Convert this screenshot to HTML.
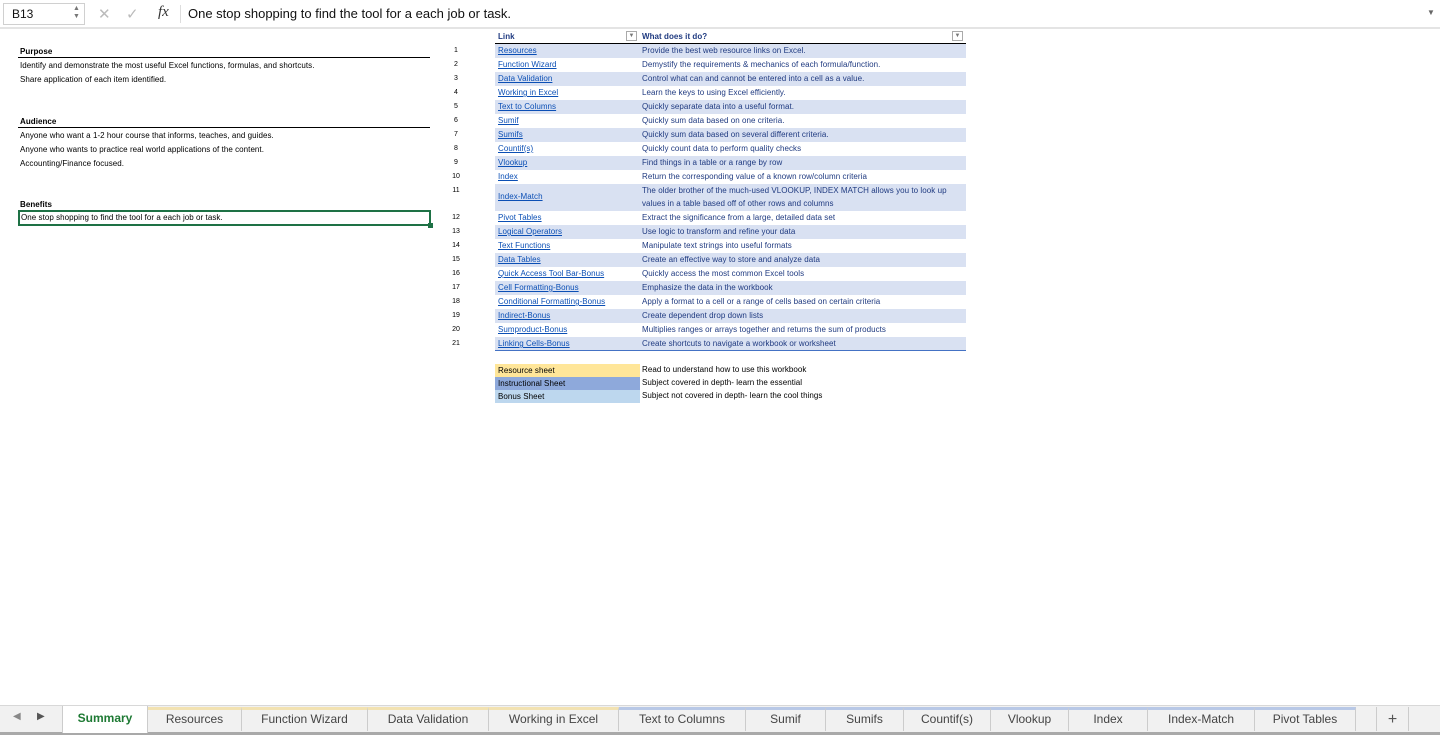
<!DOCTYPE html>
<html><head><meta charset="utf-8"><style>
*{margin:0;padding:0;box-sizing:border-box}
body{width:1440px;height:735px;overflow:hidden;background:#fff;font-family:"Liberation Sans",sans-serif;position:relative}
.a{position:absolute;white-space:nowrap}
.c{font-size:8px;line-height:14px;color:#000;letter-spacing:0.05px}
.b{font-weight:bold}
.lk{color:#0b4fb5;text-decoration:underline}
.ds{color:#1f3a80}
.n{font-size:7px;color:#000;width:20px;text-align:center}
.row{position:absolute;left:495px;width:471px;height:14px}
.sh{background:#d9e1f2}
.tab{position:absolute;top:707px;height:24px;font-size:12px;color:#444;text-align:center;line-height:19px;border-right:1px solid #ccc;border-top:3px solid #f2e2b2}
.tb{border-top-color:#b8c8e6}
</style></head><body>
<div class="a" style="left:0;top:0;width:1440px;height:28px;background:#fff;border-bottom:1px solid #c8c8c8"></div>
<div class="a" style="left:0;top:27px;width:1440px;height:2px;background:#e4e4e4"></div>
<div class="a" style="left:3px;top:3px;width:82px;height:22px;border:1px solid #d0d0d0;font-size:12px;line-height:20px;padding-left:8px;color:#111">B13</div>
<div class="a" style="left:73px;top:5px;font-size:7px;color:#777;line-height:8px">▲<br>▼</div>
<div class="a" style="left:98px;top:5px;font-size:15px;color:#bbb">✕</div>
<div class="a" style="left:126px;top:5px;font-size:15px;color:#bbb">✓</div>
<div class="a" style="left:158px;top:4px;font-size:15px;font-family:'Liberation Serif',serif;font-style:italic;color:#333">fx</div>
<div class="a" style="left:180px;top:5px;width:1px;height:18px;background:#ddd"></div>
<div class="a" style="left:188px;top:6px;font-size:13px;color:#111">One stop shopping to find the tool for a each job or task.</div>
<div class="a" style="left:1427px;top:8px;font-size:8px;color:#666">▼</div>

<div class="a c b" style="left:20px;top:45px">Purpose</div>
<div class="a" style="left:18px;top:57px;width:412px;height:1px;background:#000"></div>
<div class="a c" style="left:20px;top:59px">Identify and demonstrate the most useful Excel functions, formulas, and shortcuts.</div>
<div class="a c" style="left:20px;top:73px">Share application of each item identified.</div>
<div class="a c b" style="left:20px;top:115px">Audience</div>
<div class="a" style="left:18px;top:127px;width:412px;height:1px;background:#000"></div>
<div class="a c" style="left:20px;top:129px">Anyone who want a 1-2 hour course that informs, teaches, and guides.</div>
<div class="a c" style="left:20px;top:143px">Anyone who wants to practice real world applications of the content.</div>
<div class="a c" style="left:20px;top:157px">Accounting/Finance focused.</div>
<div class="a c b" style="left:20px;top:198px">Benefits</div>
<div class="a" style="left:18px;top:210px;width:413px;height:16px;border:2px solid #1e7145"></div>
<div class="a" style="left:428px;top:223px;width:5px;height:5px;background:#1e7145"></div>
<div class="a c" style="left:21px;top:211px">One stop shopping to find the tool for a each job or task.</div>

<div class="a c b" style="left:498px;top:30px;color:#1f3a80">Link</div>
<div class="a c b" style="left:642px;top:30px;color:#1f3a80">What does it do?</div>
<div class="a" style="left:626px;top:31px;width:11px;height:10px;border:1px solid #aaa;font-size:6px;color:#777;text-align:center;line-height:9px">▼</div>
<div class="a" style="left:952px;top:31px;width:11px;height:10px;border:1px solid #aaa;font-size:6px;color:#777;text-align:center;line-height:9px">▼</div>
<div class="a" style="left:495px;top:43px;width:471px;height:1px;background:#000"></div>

<div class="row sh" style="top:44px"></div>
<div class="row sh" style="top:72px"></div>
<div class="row sh" style="top:100px"></div>
<div class="row sh" style="top:128px"></div>
<div class="row sh" style="top:156px"></div>
<div class="row sh" style="top:184px;height:27px"></div>
<div class="row sh" style="top:225px"></div>
<div class="row sh" style="top:253px"></div>
<div class="row sh" style="top:281px"></div>
<div class="row sh" style="top:309px"></div>
<div class="row sh" style="top:337px"></div>
<div class="a" style="left:495px;top:350px;width:471px;height:1px;background:#4472c4"></div>

<div class="a n" style="left:446px;top:47px">1</div><div class="a c lk" style="left:498px;top:44px">Resources</div><div class="a c ds" style="left:642px;top:44px">Provide the best web resource links on Excel.</div>
<div class="a n" style="left:446px;top:61px">2</div><div class="a c lk" style="left:498px;top:58px">Function Wizard</div><div class="a c ds" style="left:642px;top:58px">Demystify the requirements &amp; mechanics of each formula/function.</div>
<div class="a n" style="left:446px;top:75px">3</div><div class="a c lk" style="left:498px;top:72px">Data Validation</div><div class="a c ds" style="left:642px;top:72px">Control what can and cannot be entered into a cell as a value.</div>
<div class="a n" style="left:446px;top:89px">4</div><div class="a c lk" style="left:498px;top:86px">Working in Excel</div><div class="a c ds" style="left:642px;top:86px">Learn the keys to using Excel efficiently.</div>
<div class="a n" style="left:446px;top:103px">5</div><div class="a c lk" style="left:498px;top:100px">Text to Columns</div><div class="a c ds" style="left:642px;top:100px">Quickly separate data into a useful format.</div>
<div class="a n" style="left:446px;top:117px">6</div><div class="a c lk" style="left:498px;top:114px">Sumif</div><div class="a c ds" style="left:642px;top:114px">Quickly sum data based on one criteria.</div>
<div class="a n" style="left:446px;top:131px">7</div><div class="a c lk" style="left:498px;top:128px">Sumifs</div><div class="a c ds" style="left:642px;top:128px">Quickly sum data based on several different criteria.</div>
<div class="a n" style="left:446px;top:145px">8</div><div class="a c lk" style="left:498px;top:142px">Countif(s)</div><div class="a c ds" style="left:642px;top:142px">Quickly count data to perform quality checks</div>
<div class="a n" style="left:446px;top:159px">9</div><div class="a c lk" style="left:498px;top:156px">Vlookup</div><div class="a c ds" style="left:642px;top:156px">Find things in a table or a range by row</div>
<div class="a n" style="left:446px;top:173px">10</div><div class="a c lk" style="left:498px;top:170px">Index</div><div class="a c ds" style="left:642px;top:170px">Return the corresponding value of a known row/column criteria</div>
<div class="a n" style="left:446px;top:187px">11</div><div class="a c lk" style="left:498px;top:190px">Index-Match</div><div class="a c ds" style="left:642px;top:184px;line-height:13px">The older brother of the much-used VLOOKUP, INDEX MATCH allows you to look up<br>values in a table based off of other rows and columns</div>
<div class="a n" style="left:446px;top:214px">12</div><div class="a c lk" style="left:498px;top:211px">Pivot Tables</div><div class="a c ds" style="left:642px;top:211px">Extract the significance from a large, detailed data set</div>
<div class="a n" style="left:446px;top:228px">13</div><div class="a c lk" style="left:498px;top:225px">Logical Operators</div><div class="a c ds" style="left:642px;top:225px">Use logic to transform and refine your data</div>
<div class="a n" style="left:446px;top:242px">14</div><div class="a c lk" style="left:498px;top:239px">Text Functions</div><div class="a c ds" style="left:642px;top:239px">Manipulate text strings into useful formats</div>
<div class="a n" style="left:446px;top:256px">15</div><div class="a c lk" style="left:498px;top:253px">Data Tables</div><div class="a c ds" style="left:642px;top:253px">Create an effective way to store and analyze data</div>
<div class="a n" style="left:446px;top:270px">16</div><div class="a c lk" style="left:498px;top:267px">Quick Access Tool Bar-Bonus</div><div class="a c ds" style="left:642px;top:267px">Quickly access the most common Excel tools</div>
<div class="a n" style="left:446px;top:284px">17</div><div class="a c lk" style="left:498px;top:281px">Cell Formatting-Bonus</div><div class="a c ds" style="left:642px;top:281px">Emphasize the data in the workbook</div>
<div class="a n" style="left:446px;top:298px">18</div><div class="a c lk" style="left:498px;top:295px">Conditional Formatting-Bonus</div><div class="a c ds" style="left:642px;top:295px">Apply a format to a cell or a range of cells based on certain criteria</div>
<div class="a n" style="left:446px;top:312px">19</div><div class="a c lk" style="left:498px;top:309px">Indirect-Bonus</div><div class="a c ds" style="left:642px;top:309px">Create dependent drop down lists</div>
<div class="a n" style="left:446px;top:326px">20</div><div class="a c lk" style="left:498px;top:323px">Sumproduct-Bonus</div><div class="a c ds" style="left:642px;top:323px">Multiplies ranges or arrays together and returns the sum of products</div>
<div class="a n" style="left:446px;top:340px">21</div><div class="a c lk" style="left:498px;top:337px">Linking Cells-Bonus</div><div class="a c ds" style="left:642px;top:337px">Create shortcuts to navigate a workbook or worksheet</div>

<div class="a c" style="left:495px;top:364px;width:145px;height:13px;line-height:13px;background:#ffe699;padding-left:3px">Resource sheet</div>
<div class="a c" style="left:495px;top:377px;width:145px;height:13px;line-height:13px;background:#8ea9db;padding-left:3px">Instructional Sheet</div>
<div class="a c" style="left:495px;top:390px;width:145px;height:13px;line-height:13px;background:#bdd7ee;padding-left:3px">Bonus Sheet</div>
<div class="a c" style="left:642px;top:363px">Read to understand how to use this workbook</div>
<div class="a c" style="left:642px;top:376px">Subject covered in depth- learn the essential</div>
<div class="a c" style="left:642px;top:389px">Subject not covered in depth- learn the cool things</div>

<div class="a" style="left:0;top:705px;width:1440px;height:30px;background:#f1f1f1;border-top:1px solid #d8d8d8"></div>
<div class="a" style="left:0;top:732px;width:1440px;height:3px;background:#a9a9a9"></div>
<div class="a" style="left:13px;top:711px;font-size:10px;color:#888">◀</div>
<div class="a" style="left:37px;top:711px;font-size:10px;color:#555">▶</div>
<div class="a" style="left:62px;top:706px;width:86px;height:27px;background:#fff;border-left:1px solid #ccc;border-right:1px solid #ccc;font-size:12px;font-weight:bold;color:#1e7a34;text-align:center;line-height:24px">Summary</div>
<div class="tab" style="left:148px;width:94px">Resources</div>
<div class="tab" style="left:242px;width:126px">Function Wizard</div>
<div class="tab" style="left:368px;width:121px">Data Validation</div>
<div class="tab" style="left:489px;width:130px">Working in Excel</div>
<div class="tab tb" style="left:619px;width:127px">Text to Columns</div>
<div class="tab tb" style="left:746px;width:80px">Sumif</div>
<div class="tab tb" style="left:826px;width:78px">Sumifs</div>
<div class="tab tb" style="left:904px;width:87px">Countif(s)</div>
<div class="tab tb" style="left:991px;width:78px">Vlookup</div>
<div class="tab tb" style="left:1069px;width:79px">Index</div>
<div class="tab tb" style="left:1148px;width:107px">Index-Match</div>
<div class="tab tb" style="left:1255px;width:101px">Pivot Tables</div>
<div class="a" style="left:1376px;top:707px;width:33px;height:24px;border-left:1px solid #ccc;border-right:1px solid #ccc;font-size:16px;color:#555;text-align:center;line-height:26px">+</div>
</body></html>
